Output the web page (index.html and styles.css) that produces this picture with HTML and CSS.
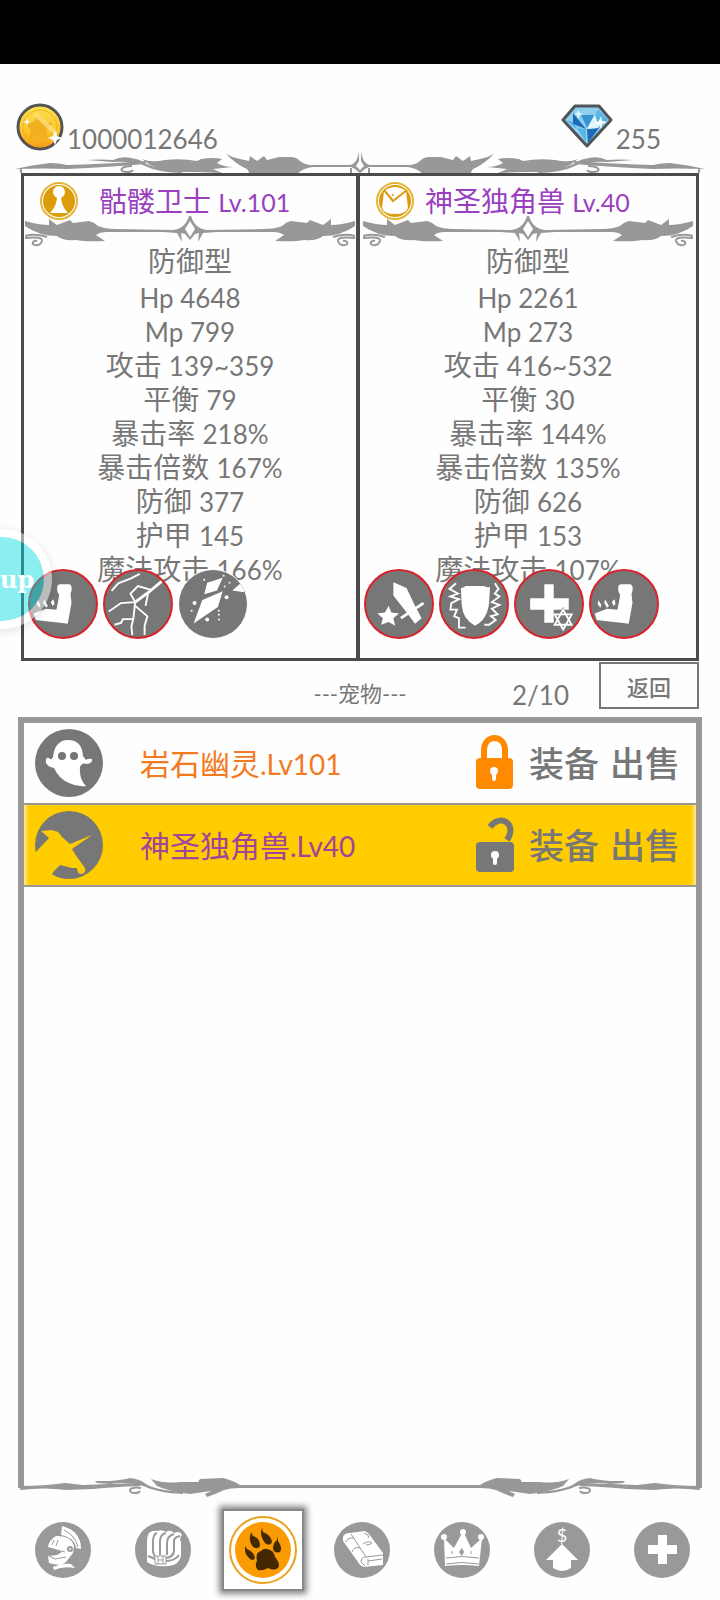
FILE: index.html
```html
<!DOCTYPE html>
<html lang="zh-CN">
<head>
  <meta charset="UTF-8">
  <meta name="viewport" content="width=device-width, initial-scale=1.0">
  <title>宠物</title>
  <link rel="stylesheet" href="styles.css">
</head>
<body>
  <!-- shared shapes -->
  <svg class="defs" aria-hidden="true">
    <symbol id="arm" viewBox="0 0 70 70">
      <path fill="#fff" d="M29 17Q29 14 32 14L42 14Q45 16 44 21L43 24L44 34L42 45L40 56L32 55L24 54L6 52L4 45L17 40L28 41L30 31L31 25Q28 22 29 17ZM8 31L11 36L10 39L7 35ZM15 30L19 37L17 39L14 34ZM25 30L26 35L24 37L22 33Z"/>
    </symbol>
    <symbol id="half-top" viewBox="0 0 345 24">
      <g fill="#9a9797">
        <path d="M0 18Q18 14 35 12Q44 12 52 14Q86 13 115 11L132 10L130 13Q96 16 52 18Q30 17 0 18Z"/>
        <path d="M72 9Q86 8 98 9Q106 5 116 7Q124 8 128 11Q135 16 152 18L172 20L165 22Q142 21 130 15Q121 10 98 11L72 9Z"/>
        <path d="M127 8Q136 12 150 9Q166 7 182 10L186 8Q198 6 207 8L202 12Q209 16 218 16L198 18L207 22L182 21Q152 22 135 14Z"/>
        <path d="M211 3Q218 7 225 8L234 10L235 5L242 10L249 5L252 9L264 6L275 6Q282 6 285 10Q290 14 296 14H334Q342 14 344 0V10L341 15L345 19V22L340 18L336 16H298Q288 17 282 23H235L232 18Q222 14 211 3Z"/>
      </g>
      <path fill="none" stroke="#9a9797" stroke-width="2" d="M117 15C105 15 103 21 112 21Q117 21 118 19M6 18V22M336 17V23"/>
    </symbol>
    <symbol id="half-card" viewBox="0 0 165 32">
      <path fill="#9a9797" d="M0 5Q14 9 24 9V3L32 9L45 4L48 7L64 5Q69 6 73 10Q80 13 91 13L148 14Q160 13 164 0H165V5L160 13L165 21V24L160 18L156 17L157 26L152 17L138 16H82Q75 16 71 19L80 25Q60 26 51 24Q37 25 32 20Q14 20 0 10Z"/>
      <path fill="none" stroke="#9a9797" stroke-width="2" d="M0 20Q10 17 22 21M0 22Q18 20 17 25C15 31 6 30 8 26Q10 24 12 25"/>
    </symbol>
    <symbol id="half-bottom" viewBox="0 0 342 24">
      <g fill="#9a9797">
        <path d="M2 14L3 10Q26 10 47 7L65 9Q90 8 122 7V10Q96 11 75 13L48 14Q26 11 2 14Z"/>
        <path d="M77 5L92 5Q104 4 112 2Q122 3 128 8Q137 14 165 16V18Q140 17 125 10Q110 5 92 8L79 7Z"/>
        <path d="M133 3Q146 8 162 6H180L182 3L205 2Q216 5 222 9H342V12H221Q213 12 206 14Q198 18 189 21L187 18L193 15L172 18Q149 15 139 10Z"/>
      </g>
      <path fill="none" stroke="#9a9797" stroke-width="2" d="M123 12C110 10 109 17 117 17Q121 17 122 15"/>
    </symbol>
    <symbol id="ornament-card" viewBox="0 0 330 32">
      <use href="#half-card" width="165" height="32"/>
      <use href="#half-card" width="165" height="32" transform="translate(330 0) scale(-1 1)"/>
    </symbol>
  </svg>

  <div class="status-bar"></div>

  <header class="wallet">
    <div class="coins">
      <svg width="48" height="48" viewBox="0 0 48 48" aria-hidden="true">
        <defs>
          <linearGradient id="gold" x1="0" y1="0" x2="0" y2="1">
            <stop offset="0" stop-color="#fbe250"/>
            <stop offset=".6" stop-color="#fbc52a"/>
            <stop offset="1" stop-color="#f79a12"/>
          </linearGradient>
        </defs>
        <circle cx="24" cy="24" r="22" fill="url(#gold)" stroke="#555" stroke-width="3"/>
        <circle cx="24" cy="24" r="17" fill="none" stroke="#f3b024" stroke-width="1"/>
        <path fill="#f2b021" d="M22 11L27 19L37 20L30 27L32 37L22 33L13 37L15 27L8 20L18 19Z"/>
        <path fill="#fbe58d" opacity=".7" d="M20 9L42 29L40 33L18 13Z"/>
        <path fill="#fff" d="M39 28L41 33L46 35L41 37L39 42L37 37L32 35L37 33ZM11 15L12 18L15 19L12 20L11 23L10 20L7 19L10 18Z"/>
      </svg>
      <span>1000012646</span>
    </div>
    <div class="gems">
      <svg width="52" height="46" viewBox="0 0 52 44" aria-hidden="true">
        <path fill="#8fd0ee" stroke="#4f5558" stroke-width="3" stroke-linejoin="round" d="M14 2H38L50 16L26 42L2 16Z"/>
        <path fill="#5ab6e2" d="M5 16L12 18L25 38V25L14 24ZM37 5L47 16L38 24L34 12Z"/>
        <path fill="#1c6bb5" d="M12 9L25 25L12 20ZM26 25L38 24L27 39Z"/>
        <path fill="#3a94d0" d="M20 11H33L26 24Z"/>
        <path fill="#e4f6fd" d="M26 25L34 11L37 20L44 17L36 24ZM17 6L19 9L22 10L19 11L17 15L16 11L13 10L16 9Z"/>
        <path fill="#fff" d="M40 12L41 17L46 18L41 20L40 25L38 20L34 19L38 17Z"/>
      </svg>
      <span>255</span>
    </div>
  </header>

  <svg class="ornament-top" viewBox="0 0 690 24" aria-hidden="true">
    <use href="#half-top" width="345" height="24"/>
    <use href="#half-top" width="345" height="24" transform="translate(690 0) scale(-1 1)"/>
  </svg>

  <main>
    <section class="cards">
      <article class="card">
        <h2>
          <svg width="40" height="40" viewBox="0 0 40 40" aria-hidden="true">
            <circle cx="20" cy="20" r="18" fill="#fff" stroke="#e5b43a" stroke-width="2"/>
            <circle cx="20" cy="20" r="16" fill="#dc9d0c"/>
            <circle cx="20" cy="11" r="6" fill="#fff"/>
            <path fill="#fff" d="M18 15H22Q22 25 29 32H11Q18 25 18 15Z"/>
          </svg>
          <span>骷髅卫士 <b>Lv.101</b></span>
        </h2>
        <svg class="ornament-card" viewBox="0 0 330 32" aria-hidden="true"><use href="#ornament-card"/></svg>
        <ul class="stats">
          <li class="type">防御型</li>
          <li><b>Hp 4648</b></li>
          <li><b>Mp 799</b></li>
          <li>攻击 <b>139~359</b></li>
          <li>平衡 <b>79</b></li>
          <li>暴击率 <b>218%</b></li>
          <li>暴击倍数 <b>167%</b></li>
          <li>防御 <b>377</b></li>
          <li>护甲 <b>145</b></li>
          <li>魔法攻击 <b>166%</b></li>
        </ul>
        <div class="skills">
          <svg class="skill ring" viewBox="0 0 70 70"><use href="#arm"/></svg>
          <svg class="skill ring" viewBox="0 0 70 70">
            <g fill="none" stroke="#fff" stroke-width="2">
              <path stroke-width="3" d="M60 11L47 22L32 33"/>
              <path d="M32 33L27 24L35 16L49 20M46 22L43 37M32 33L17 34L4 43M32 33L30 51L28 59L29 68M32 37L45 48L42 58L42 68M30 51L19 51L17 55L10 57M7 21L14 13L27 8L37 3"/>
            </g>
          </svg>
          <svg class="skill" viewBox="0 0 70 70">
            <path fill="#fff" d="M29 13L45 8L39 21L26 25ZM24 31L45 22L40 38L15 55ZM64 13L55 21L67 23L68 18Z"/>
            <g fill="#fff">
              <circle cx="16" cy="34" r="2"/><circle cx="26" cy="10" r="1"/><circle cx="47" cy="17" r="1"/>
              <circle cx="52" cy="13" r="1"/><circle cx="49" cy="28" r="2"/><circle cx="41" cy="42" r="1"/>
              <circle cx="29" cy="51" r="2"/><circle cx="41" cy="51" r="1"/><circle cx="13" cy="42" r="1"/>
              <circle cx="41" cy="46" r="1"/><circle cx="46" cy="6" r="1"/>
            </g>
          </svg>
        </div>
      </article>

      <article class="card">
        <h2>
          <svg width="40" height="40" viewBox="0 0 40 40" aria-hidden="true">
            <circle cx="20" cy="20" r="18" fill="#fff" stroke="#e5b43a" stroke-width="2"/>
            <circle cx="20" cy="20" r="16" fill="#dc9d0c"/>
            <path fill="#fff" d="M9 10Q20 2 31 10L33 27Q31 33 20 33Q9 33 7 27Z"/>
            <path fill="none" stroke="#dc9d0c" stroke-width="2" d="M9 9L18 20L32 9"/>
            <circle cx="18" cy="14" r="1" fill="#dc9d0c"/>
          </svg>
          <span>神圣独角兽 <b>Lv.40</b></span>
        </h2>
        <svg class="ornament-card" viewBox="0 0 330 32" aria-hidden="true"><use href="#ornament-card"/></svg>
        <ul class="stats">
          <li class="type">防御型</li>
          <li><b>Hp 2261</b></li>
          <li><b>Mp 273</b></li>
          <li>攻击 <b>416~532</b></li>
          <li>平衡 <b>30</b></li>
          <li>暴击率 <b>144%</b></li>
          <li>暴击倍数 <b>135%</b></li>
          <li>防御 <b>626</b></li>
          <li>护甲 <b>153</b></li>
          <li>魔法攻击 <b>107%</b></li>
        </ul>
        <div class="skills">
          <svg class="skill ring" viewBox="0 0 70 70">
            <path fill="#fff" d="M29 12L43 18L52 37L59 50L52 56L44 45L29 26Z"/>
            <path stroke="#fff" stroke-width="3" d="M61 34L37 50"/>
            <path fill="#fff" d="M24 37L27 44L35 45L29 50L31 58L24 54L16 57L18 50L12 45L20 44Z"/>
          </svg>
          <svg class="skill ring" viewBox="0 0 70 70">
            <path fill="#fff" d="M21 18Q24 18 26 16H46Q48 18 52 17L51 34Q49 52 36 58Q23 51 22 36Z"/>
            <path fill="none" stroke="#fff" stroke-width="2" d="M16 13L9 19L18 24L10 27L19 30L11 34L10 41L17 41L14 48L19 50L19 60H26M57 13L61 19L57 24L62 27L54 33L62 36L54 40L60 46L53 48L58 52L51 57H46"/>
          </svg>
          <svg class="skill ring" viewBox="0 0 70 70">
            <path fill="#fff" d="M30 14H40V29H56V41H40V55H30V41H15V29H30Z"/>
            <path fill="#777" stroke="#777" stroke-width="4" d="M50 42L59 57H41Z"/>
            <path fill="none" stroke="#fff" stroke-width="2" d="M50 41L59 57H41ZM50 62L41 46H59Z"/>
          </svg>
          <svg class="skill ring" viewBox="0 0 70 70"><use href="#arm"/></svg>
        </div>
      </article>
    </section>

    <div class="toolbar">
      <h1>---宠物---</h1>
      <span class="count">2/10</span>
      <button class="back" type="button">返回</button>
    </div>

    <ul class="pets">
      <li class="pet">
        <svg class="avatar" viewBox="0 0 68 68" aria-hidden="true">
          <circle cx="34" cy="34" r="34" fill="#777"/>
          <path fill="#fff" d="M33 11Q20 11 18 28Q16 32 14 29Q10 28 11 34Q13 38 19 39Q24 50 34 54Q42 58 51 57Q44 50 45 38Q47 33 52 35Q58 34 57 30Q53 29 51 31L48 27Q47 11 33 11Z"/>
          <circle cx="27" cy="27" r="4" fill="#777"/>
          <circle cx="39" cy="27" r="4" fill="#777"/>
        </svg>
        <span class="name orange">岩石幽灵<b>.Lv101</b></span>
        <button class="lock" type="button" aria-label="解锁">
          <svg width="38" height="58" viewBox="0 0 38 58">
            <path fill="none" stroke="#ff8a00" stroke-width="6" d="M8 28V16C8 0 29 0 29 16V28"/>
            <rect y="24" width="37" height="31" rx="4" fill="#ff8a00"/>
            <circle cx="18" cy="37" r="4" fill="#fff"/>
            <path stroke="#fff" stroke-width="4" stroke-linecap="round" d="M18 38V45"/>
          </svg>
        </button>
        <button class="action" type="button">装备</button>
        <button class="action" type="button">出售</button>
      </li>
      <li class="pet selected">
        <svg class="avatar" viewBox="0 0 68 68" aria-hidden="true">
          <circle cx="34" cy="34" r="34" fill="#777"/>
          <path fill="#fc0" d="M6 20L17 19L23 21L27 26L35 33L57 24L37 38L42 46L50 57Q51 63 45 63Q42 61 42 57L37 57L25 54L20 59L15 66L0 66V42L14 27Z"/>
        </svg>
        <span class="name purple">神圣独角兽<b>.Lv40</b></span>
        <button class="lock" type="button" aria-label="锁定">
          <svg width="38" height="58" viewBox="0 0 38 58">
            <path fill="none" stroke="#777" stroke-width="6" d="M14 11C24 -3 42 8 31 24"/>
            <rect y="26" width="38" height="30" rx="4" fill="#777"/>
            <circle cx="19" cy="39" r="4" fill="#fff"/>
            <path stroke="#fff" stroke-width="4" stroke-linecap="round" d="M19 40V47"/>
          </svg>
        </button>
        <button class="action" type="button">装备</button>
        <button class="action" type="button">出售</button>
      </li>
    </ul>
    <svg class="ornament-bottom" viewBox="0 0 684 24" aria-hidden="true">
      <use href="#half-bottom" width="342" height="24"/>
      <use href="#half-bottom" width="342" height="24" transform="translate(684 0) scale(-1 1)"/>
    </svg>
  </main>

  <nav class="tabs">
    <a href="#hero" aria-label="角色">
      <svg class="tab-icon" viewBox="0 0 56 56">
        <circle cx="28" cy="28" r="28" fill="#999"/>
        <path fill="#fff" d="M27 4Q46 9 46 27L41 26Q40 16 26 13ZM21 14Q36 13 39 24L38 31L31 40Q26 45 14 41L13 34L22 33L27 30L13 25Q14 18 21 14ZM18 45Q27 41 36 42L40 46Q28 44 19 48Z"/>
        <path fill="none" stroke="#999" stroke-width="1" d="M29 8Q40 13 43 25M17 23L19 18M21 24L23 18M14 26L30 30M14 34L20 37L31 35"/>
        <circle cx="35" cy="27" r="3" fill="#999"/><circle cx="35" cy="27" r="1" fill="#fff"/>
      </svg>
    </a>
    <a href="#bag" aria-label="背包">
      <svg class="tab-icon" viewBox="0 0 56 56">
        <circle cx="28" cy="28" r="28" fill="#999"/>
        <path fill="#fff" d="M14 11Q17 8 22 9Q27 7 31 10Q36 7 39 11Q45 8 47 13Q44 16 46 20V34Q44 43 34 44Q18 45 12 40V20Q12 14 14 11Z"/>
        <path fill="none" stroke="#999" stroke-width="2" d="M22 11Q18 12 18 20V30L20 35M31 11Q25 12 25 20V33M39 12Q32 14 32 21V33M45 14Q38 15 39 21V29Q38 36 30 36M13 34L20 37M30 39Q40 39 44 33"/>
        <path fill="#fff" stroke="#999" stroke-width="1" d="M20 34H31V42H20ZM23 34V42M28 34V42M23 38H28"/>
      </svg>
    </a>
    <a class="active" href="#pets" aria-label="宠物" aria-current="page">
      <svg class="paw" viewBox="0 0 68 68">
        <circle cx="34" cy="34" r="33" fill="#fff" stroke="#e9a21b" stroke-width="2"/>
        <circle cx="34" cy="34" r="28" fill="#fb9b04"/>
        <path fill="#432800" d="M38 33Q45 34 46 41Q52 48 49 52Q45 55 39 52Q34 55 29 54Q25 50 28 45Q26 36 32 35Q35 32 38 33ZM22 16L24 20Q31 22 31 30Q29 34 24 31Q20 26 21 21ZM33 12L34 16Q42 19 43 26Q41 31 36 27Q32 22 32 16ZM49 20L49 25Q54 32 51 36Q46 38 44 33Q44 27 48 24ZM16 30L18 33Q25 36 26 42Q24 46 20 42Q16 38 16 34Z"/>
      </svg>
    </a>
    <a href="#book" aria-label="图鉴">
      <svg class="tab-icon" viewBox="0 0 56 56">
        <circle cx="28" cy="28" r="28" fill="#999"/>
        <path fill="#fff" d="M9 15Q10 11 16 11L31 9L35 12L49 31V43L30 45Q26 44 24 40L9 19Z"/>
        <path fill="none" stroke="#999" stroke-width="1" d="M17 12L32 35L49 33M32 35Q27 35 27 40L31 44M34 37V43M48 37L34 39M12 20Q14 15 20 16M18 30Q20 24 26 26M29 22Q35 18 38 21Q36 23 32 23M30 11L35 14L34 16"/>
      </svg>
    </a>
    <a href="#rank" aria-label="排行">
      <svg class="tab-icon" viewBox="0 0 56 56">
        <circle cx="28" cy="28" r="28" fill="#999"/>
        <path fill="#fff" d="M10 16L20 26L28 11H30L37 26L48 16L45 44Q28 42 11 44Z"/>
        <circle cx="10" cy="15" r="3" fill="#fff"/><circle cx="29" cy="10" r="3" fill="#fff"/><circle cx="47" cy="15" r="3" fill="#fff"/>
        <path fill="#999" d="M28 26L30 30L28 34L25 30Z"/>
        <path fill="none" stroke="#999" stroke-width="1" d="M12 36Q28 33 45 36M12 42Q28 39 45 42M18 29V32M37 29V32"/>
      </svg>
    </a>
    <a href="#upgrade" aria-label="升级">
      <svg class="tab-icon" viewBox="0 0 56 56">
        <circle cx="28" cy="28" r="28" fill="#999"/>
        <text class="dollar" x="28" y="20" text-anchor="middle">$</text>
        <path fill="#fff" d="M28 22L44 38H37V46Q28 52 19 46V38H12Z"/>
      </svg>
    </a>
    <a href="#more" aria-label="更多">
      <svg class="tab-icon" viewBox="0 0 56 56">
        <circle cx="28" cy="28" r="28" fill="#999"/>
        <path fill="#fff" d="M24 13H33V23H43V32H33V42H24V32H14V23H24Z"/>
      </svg>
    </a>
  </nav>

  <button class="bubble" type="button">up</button>
</body>
</html>
```
FILE: styles.css
```css
* {
  box-sizing: border-box;
}

body {
  margin: 0;
  min-height: 100vh;
  display: flex;
  flex-direction: column;
  position: relative;
  overflow-x: hidden;
  background: #fefefe;
  color: #777;
  font-family: Lato, "Noto Sans CJK SC", sans-serif;
  font-size: 28px;
}

b {
  font-size: 26px;
  font-weight: 400;
}

ul {
  list-style: none;
  margin: 0;
  padding: 0;
}

button {
  padding: 0;
  border: none;
  background: none;
  color: inherit;
  font-family: inherit;
  cursor: pointer;
}

svg {
  display: block;
}

.defs {
  position: absolute;
  width: 0;
  height: 0;
}

.status-bar {
  height: 64px;
  background: #000;
}

/* coins and gems */
.wallet {
  display: flex;
  justify-content: space-between;
  padding: 39px 59px 0 16px;
  height: 87px;
  font-size: 26px;
  line-height: 32px;
}

.coins,
.gems {
  display: flex;
  gap: 3px;
}

.coins span,
.gems span {
  margin-top: 20px;
}

.ornament-top {
  width: calc(100% - 30px);
  margin: 0 15px -2px;
}

main {
  flex: 1;
  display: flex;
  flex-direction: column;
}

/* fighting pets */
.cards {
  display: grid;
  grid-template-columns: 1fr 1fr;
  margin: 0 21px;
  border: 3px solid #4b4b4b;
}

.card {
  position: relative;
  height: 482px;
}

.card:first-child {
  border-right: 4px solid #4b4b4b;
}

.card h2 {
  display: flex;
  align-items: center;
  gap: 20px;
  height: 42px;
  margin: 4px 0 0 15px;
  color: #9a3fc0;
  font-size: 28px;
  font-weight: 400;
  line-height: 40px;
  white-space: nowrap;
}

.card h2 b {
  font-size: 25px;
}

.card + .card h2 {
  gap: 10px;
}

.ornament-card {
  width: 100%;
  height: 32px;
  margin-top: -6px;
}

.stats {
  margin-top: -4px;
  text-align: center;
  line-height: 34px;
}

.stats li {
  height: 34px;
}

.stats .type {
  margin-bottom: 2px;
}

.skills {
  position: absolute;
  left: 4px;
  bottom: 19px;
  display: flex;
  gap: 5px;
}

.skill {
  width: 70px;
  height: 70px;
  border: 1px solid #fefefe;
  border-radius: 50%;
  background: #777;
}

.skill.ring {
  border: 2px solid #d8232a;
}

/* title line above the list */
.toolbar {
  display: grid;
  grid-template-columns: 1fr auto 1fr 100px;
  align-items: start;
  margin: 1px 21px 6px;
}

.toolbar h1 {
  grid-column: 2;
  margin: 16px 0 0 100px;
  font-size: 22px;
  font-weight: 400;
  line-height: 32px;
}

.count {
  padding: 17px 30px 0 0;
  font-size: 26px;
  line-height: 32px;
  text-align: right;
}

.back {
  height: 47px;
  border: 2px solid #777;
  font-size: 22px;
  font-weight: 500;
}

/* pet list */
.pets {
  flex: 1;
  margin: 0 18px;
  border: 6px solid #9a9797;
  border-bottom: none;
}

.pet {
  display: flex;
  align-items: center;
  height: 82px;
  padding: 0 16px 0 11px;
  border-bottom: 2px solid #9a9797;
}

.pet.selected {
  background: #fc0;
  box-shadow: inset 5px 0 4px -3px #fff0b0, inset -5px 0 4px -3px #fff0b0;
}

.avatar {
  width: 68px;
  height: 68px;
}

.name {
  flex: 1;
  margin-left: 37px;
  font-size: 30px;
  line-height: 40px;
}

.name b {
  font-size: 28px;
}

.orange {
  color: #f47a1f;
}

.purple {
  color: #a0459c;
}

.lock {
  margin-right: 4px;
}

.action {
  margin-left: 11px;
  font-size: 35px;
  font-weight: 500;
  line-height: 40px;
}

.ornament-bottom {
  position: relative;
  width: calc(100% - 36px);
  margin: -12px 18px 0;
}

/* bottom tabs */
.tabs {
  display: grid;
  grid-template-columns: repeat(7, 1fr);
  justify-items: center;
  align-items: center;
  height: 100px;
  padding: 0 8px 0 13px;
}

.tab-icon {
  width: 56px;
  height: 56px;
}

.active {
  padding: 5px;
  border: 2px solid #888;
  background: #fff;
  box-shadow: 0 0 6px 3px #888;
}

.paw {
  width: 68px;
  height: 68px;
}

.dollar {
  fill: #fff;
  font-size: 18px;
}

/* floating helper, half off the left edge */
.bubble {
  position: absolute;
  top: 529px;
  left: -48px;
  width: 100px;
  height: 100px;
  padding-left: 40px;
  border: 8px solid rgba(255, 255, 255, 0.5);
  border-radius: 50%;
  background: rgba(0, 220, 225, 0.45);
  background-clip: padding-box;
  box-shadow: 0 2px 10px rgba(0, 0, 0, 0.12);
  color: #fff;
  font-family: "DejaVu Serif", serif;
  font-size: 24px;
  font-weight: 700;
  text-align: left;
}
```
